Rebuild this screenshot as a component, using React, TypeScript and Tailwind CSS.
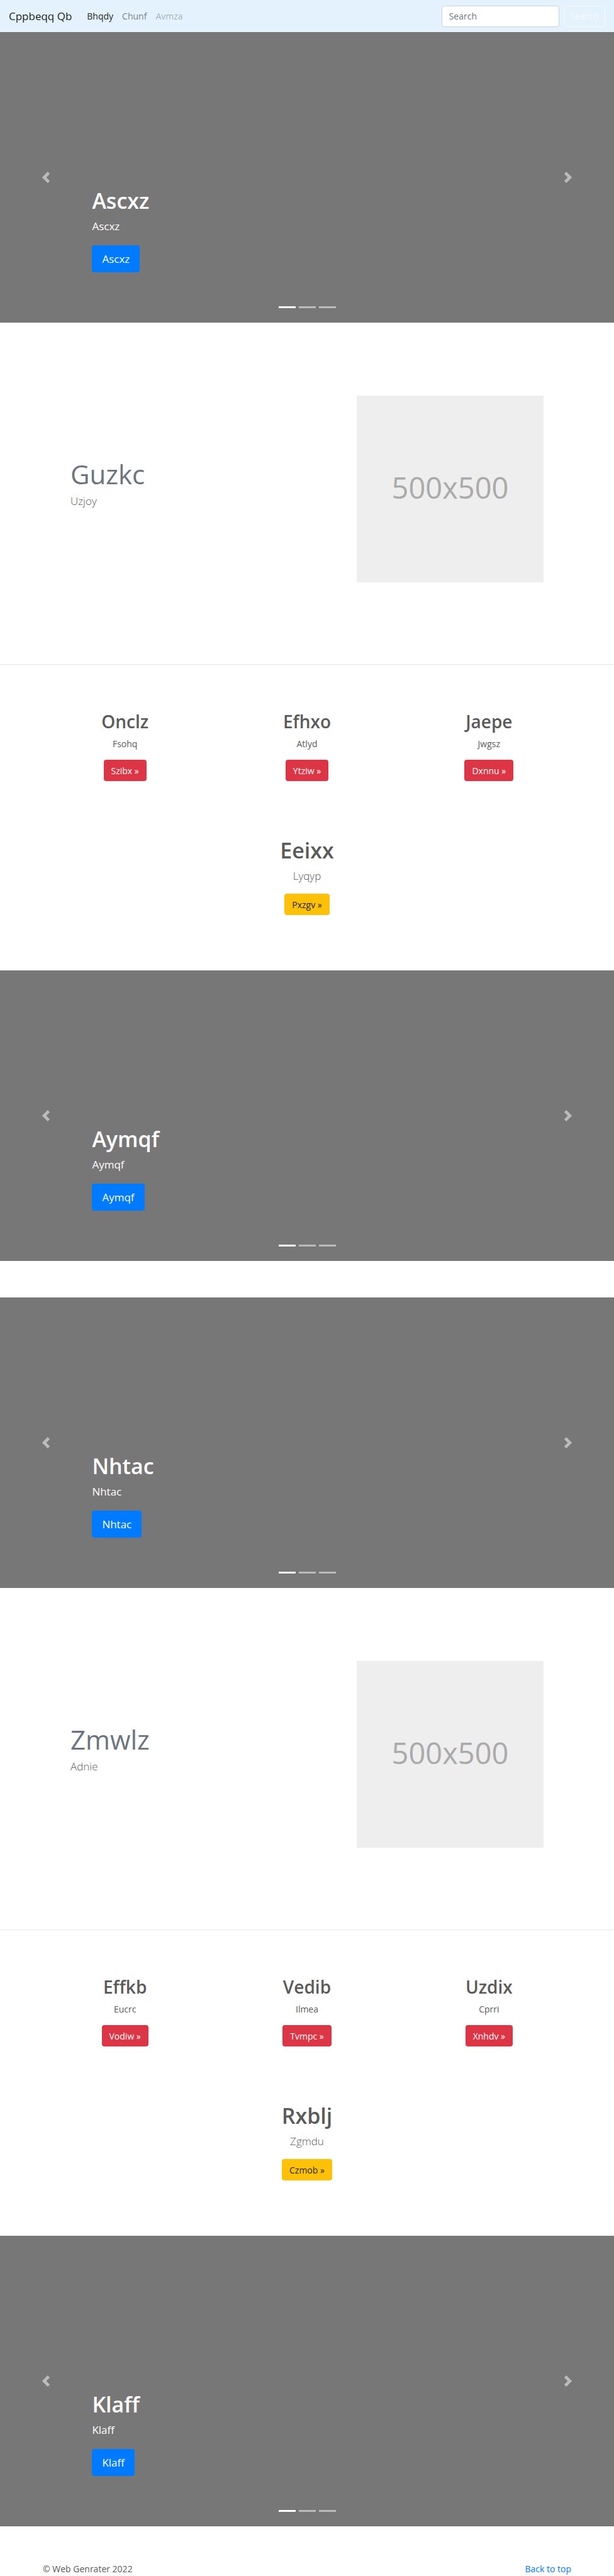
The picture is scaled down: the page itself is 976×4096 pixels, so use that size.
import React from 'react';

type Entry = { title: string; text: string; action: string };

function Chevron({ direction }: { direction: 'left' | 'right' }) {
  return (
    <svg viewBox="0 0 8 8" className="size-[18px] fill-white" aria-hidden="true">
      {direction === 'left' ? (
        <path d="M5.25 0l-4 4 4 4 1.5-1.5-2.5-2.5 2.5-2.5-1.5-1.5z" />
      ) : (
        <path d="M2.75 0l-1.5 1.5 2.5 2.5-2.5 2.5 1.5 1.5 4-4-4-4z" />
      )}
    </svg>
  );
}

function Carousel({ label }: { label: string }) {
  return (
    <section className="relative flex min-h-[462px] flex-col justify-end bg-[#777777] px-[15%] pb-20 text-white">
      <h1 className="text-[34px] leading-[44px] font-semibold">{label}</h1>
      <p className="mt-[5px] text-[17px] leading-7">{label}</p>
      <a
        href="#"
        className="mt-4 flex h-[43px] items-center self-start rounded-[4px] bg-[#007bff] px-4 text-[17px] leading-7"
      >
        {label}
      </a>
      <button
        aria-label="Previous"
        className="absolute inset-y-0 left-0 flex w-[15%] items-center justify-center opacity-50"
      >
        <Chevron direction="left" />
      </button>
      <button
        aria-label="Next"
        className="absolute inset-y-0 right-0 flex w-[15%] items-center justify-center opacity-50"
      >
        <Chevron direction="right" />
      </button>
      <div className="absolute inset-x-0 bottom-[23px] flex justify-center gap-[5px]">
        <button aria-label="Slide 1" className="h-[3px] w-[27px] bg-white" />
        <button aria-label="Slide 2" className="h-[3px] w-[27px] bg-white opacity-50" />
        <button aria-label="Slide 3" className="h-[3px] w-[27px] bg-white opacity-50" />
      </div>
    </section>
  );
}

function Feature({ title, text }: { title: string; text: string }) {
  return (
    <section className="flex items-center justify-between px-[112px] pt-[116px] pb-[130px]">
      <div className="pb-4">
        <h2 className="text-[42px] leading-[52px] text-[#6c757d]">{title}</h2>
        <p className="mt-[3px] text-[17px] leading-7 font-light">{text}</p>
      </div>
      <div className="flex size-[297px] items-center justify-center bg-[#eeeeee] pb-1 text-[47px] text-[#aaaaaa]">
        500x500
      </div>
    </section>
  );
}

function Columns({ items }: { items: Entry[] }) {
  return (
    <section className="grid grid-cols-3 px-[54px] pt-[72px] text-center">
      {items.map((item) => (
        <div key={item.title} className="flex flex-col items-center">
          <h2 className="text-[28px] leading-9 font-semibold">{item.title}</h2>
          <p className="mt-[6px] text-[14px] leading-6">{item.text}</p>
          <a
            href="#"
            className="mt-[13px] flex h-[34px] items-center rounded-[4px] bg-[#dc3545] px-3 text-[14px] text-white"
          >
            {item.action} »
          </a>
        </div>
      ))}
    </section>
  );
}

function CallOut({ title, text, action }: Entry) {
  return (
    <section className="flex flex-col items-center pt-[88px] pb-[88px]">
      <h2 className="text-[34px] leading-[44px] font-semibold">{title}</h2>
      <p className="mt-[5px] text-[17px] leading-7 font-light">{text}</p>
      <a
        href="#"
        className="mt-[14px] flex h-[34px] items-center rounded-[4px] bg-[#ffc107] px-3 text-[14px] text-[#212529]"
      >
        {action} »
      </a>
    </section>
  );
}

export default function App() {
  return (
    <div className="bg-white font-['Open_Sans','Noto_Sans',sans-serif] text-[#5a5a5a]">
      <header className="flex h-[51px] items-center bg-[#e3f2fd] px-[14px]">
        <a href="#" className="text-[17px] leading-7 text-black/90">
          Cppbeqq Qb
        </a>
        <nav className="ml-[24px] flex grow gap-[14px] text-[14px] leading-6">
          <a href="#" className="text-black/90">Bhqdy</a>
          <a href="#" className="text-black/50">Chunf</a>
          <a href="#" className="text-black/30">Avmza</a>
        </nav>
        <form className="flex gap-[7px]" onSubmit={(e) => e.preventDefault()}>
          <input
            type="text"
            placeholder="Search"
            aria-label="Search"
            className="h-[34px] w-[187px] rounded-[4px] border border-[#ced4da] bg-white px-[11px] text-[14px] text-[#495057] placeholder:text-[#6c757d]"
          />
          <button
            type="submit"
            className="h-[34px] rounded-[4px] border border-[#f8f9fa] px-[10px] text-[14px] text-[#f8f9fa]"
          >
            Search
          </button>
        </form>
      </header>
      <main>
        <Carousel label="Ascxz" />
        <Feature title="Guzkc" text="Uzjoy" />
        <hr className="border-t border-[#e5e5e5]" />
        <Columns
          items={[
            { title: 'Onclz', text: 'Fsohq', action: 'Szibx' },
            { title: 'Efhxo', text: 'Atlyd', action: 'Ytziw' },
            { title: 'Jaepe', text: 'Jwgsz', action: 'Dxnnu' },
          ]}
        />
        <CallOut title="Eeixx" text="Lyqyp" action="Pxzgv" />
        <Carousel label="Aymqf" />
        <div className="h-[58px]" />
        <Carousel label="Nhtac" />
        <Feature title="Zmwlz" text="Adnie" />
        <hr className="border-t border-[#e5e5e5]" />
        <Columns
          items={[
            { title: 'Effkb', text: 'Eucrc', action: 'Vodiw' },
            { title: 'Vedib', text: 'Ilmea', action: 'Tvmpc' },
            { title: 'Uzdix', text: 'Cprri', action: 'Xnhdv' },
          ]}
        />
        <CallOut title="Rxblj" text="Zgmdu" action="Czmob" />
        <Carousel label="Klaff" />
      </main>
      <footer className="flex justify-between px-[68px] pt-[57px] text-[14px] leading-[22px]">
        <p>© Web Genrater 2022</p>
        <a href="#" className="text-[#007bff]">Back to top</a>
      </footer>
    </div>
  );
}
